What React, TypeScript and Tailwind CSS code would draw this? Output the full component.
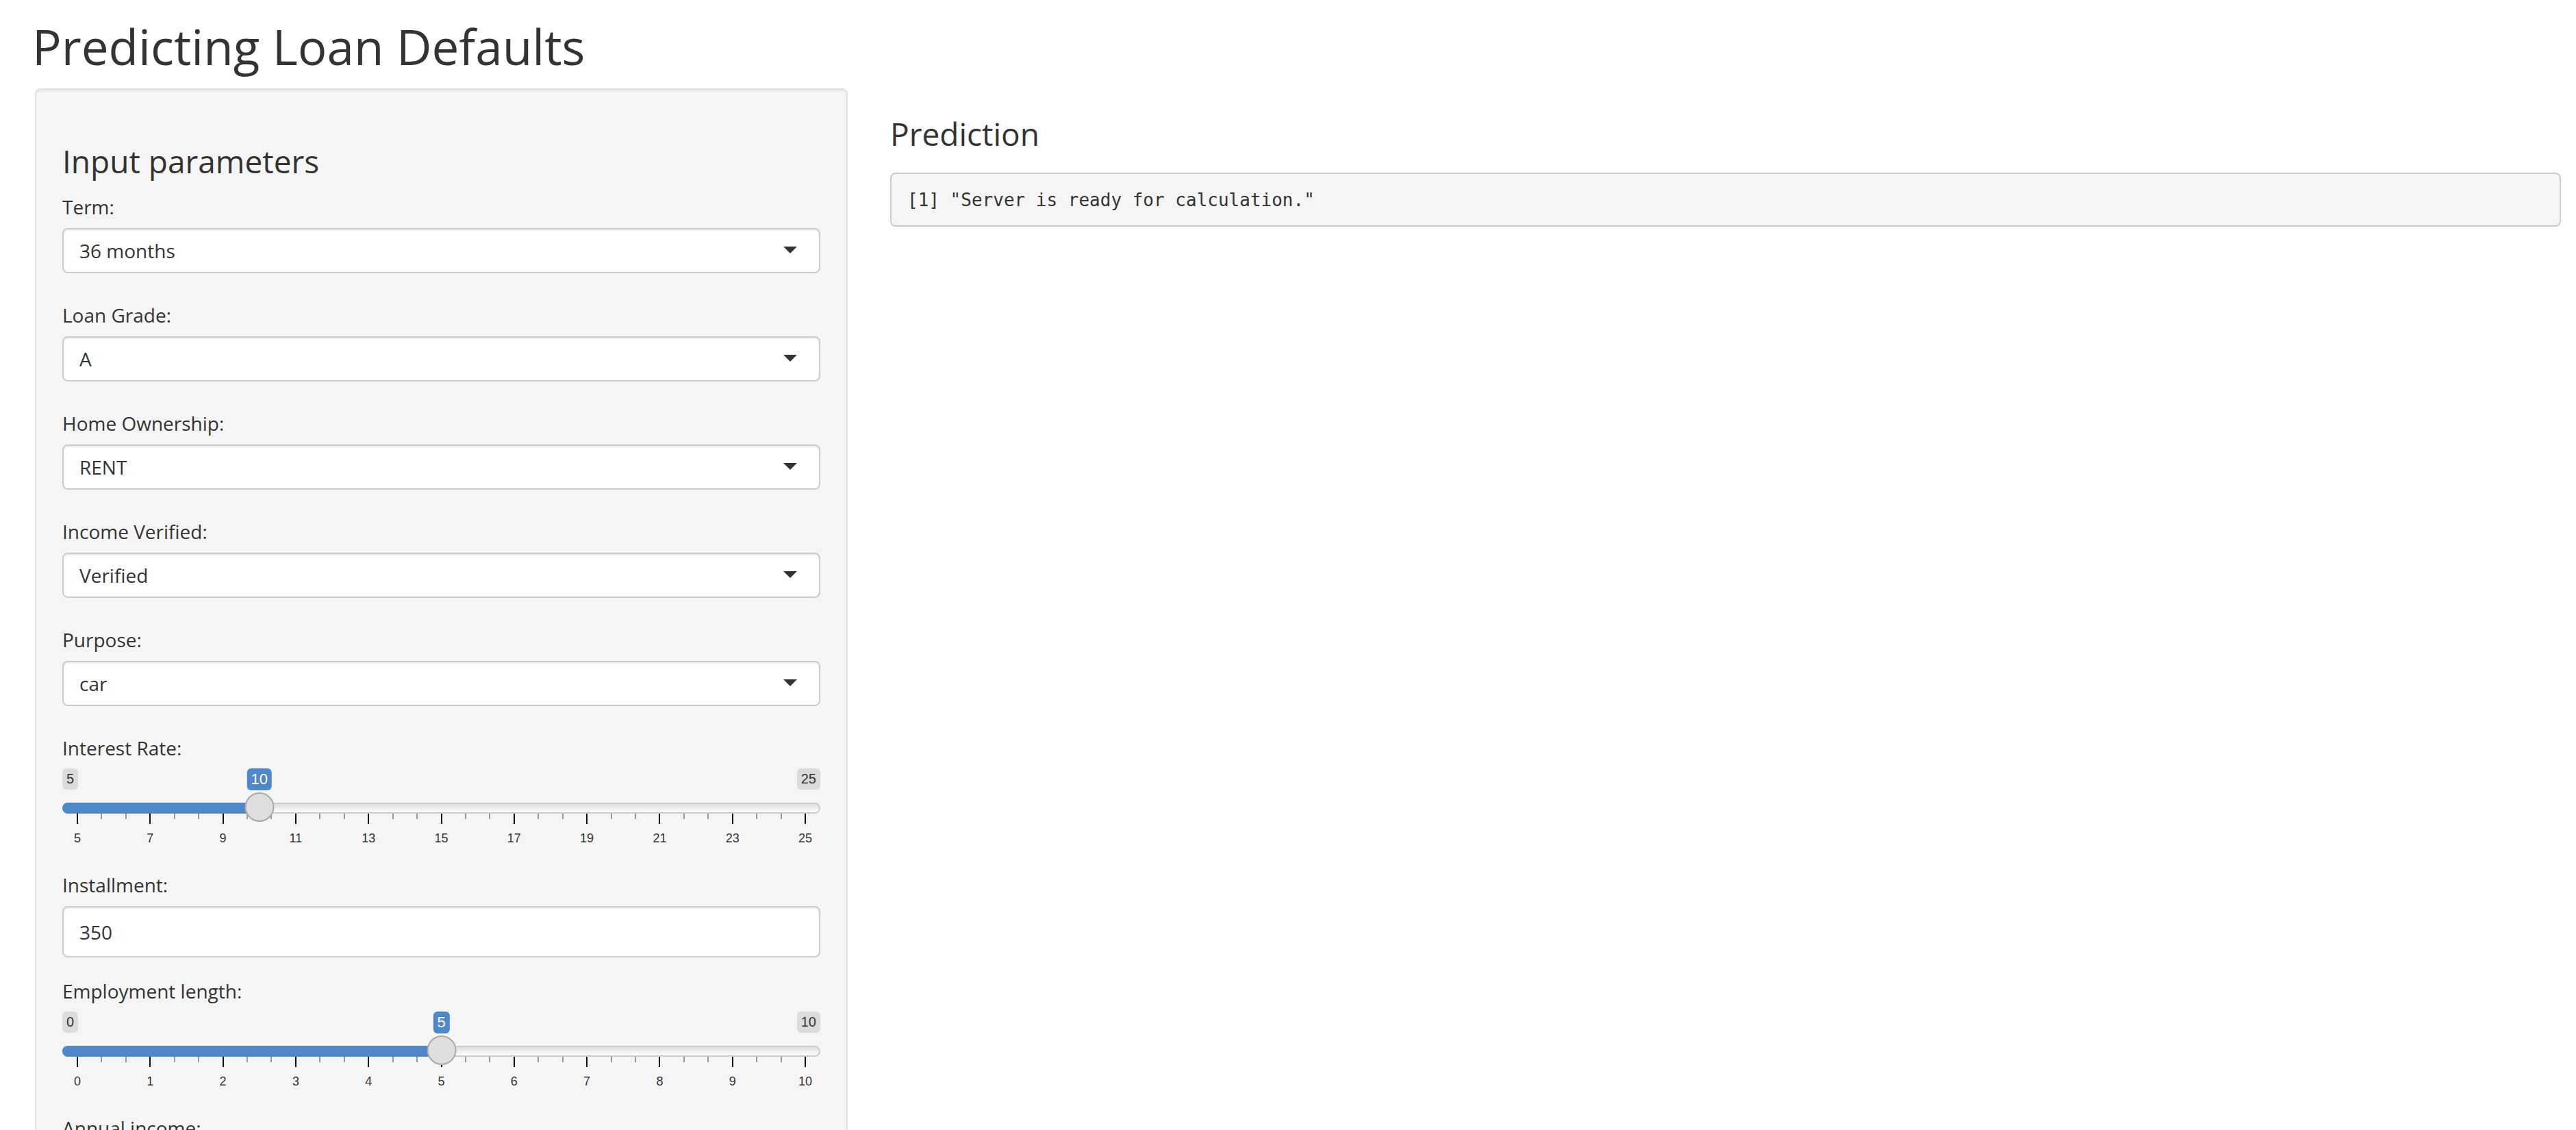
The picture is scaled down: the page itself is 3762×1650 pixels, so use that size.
import React from "react";

const BLUE = "#5087c8";

function Label({ children }: { children: React.ReactNode }) {
  return <div className="h-[40px] text-[28px] leading-[40px] text-[#333] mb-[11px]">{children}</div>;
}

function SelectBox({ value }: { value: string }) {
  return (
    <div className="flex h-[66px] items-center justify-between rounded-[8px] border-2 border-[#ccc] bg-white pl-[23px] pr-[32px] shadow-[inset_0_2px_2px_rgba(0,0,0,0.075)]">
      <span className="text-[28px] leading-none text-[#333]">{value}</span>
      <span className="mt-[-2px] h-0 w-0 border-x-[10px] border-t-[10px] border-x-transparent border-t-[#333]" />
    </div>
  );
}

function SelectGroup({ label, value }: { label: string; value: string }) {
  return (
    <div className="mb-[41px]">
      <Label>{label}</Label>
      <SelectBox value={value} />
    </div>
  );
}

function NumberGroup({ label, value }: { label: string; value: string }) {
  return (
    <div className="mb-[29px]">
      <Label>{label}</Label>
      <div className="flex h-[75px] items-center rounded-[8px] border-2 border-[#ccc] bg-white px-[23px] shadow-[inset_0_2px_2px_rgba(0,0,0,0.075)]">
        <span className="text-[28px] leading-none text-[#333]">{value}</span>
      </div>
    </div>
  );
}

interface SliderProps {
  label: string;
  min: number;
  max: number;
  step: number;
  value: number;
}

function pos(f: number) {
  return `calc(22px + (100% - 44px) * ${f})`;
}

function Slider({ label, min, max, step, value }: SliderProps) {
  const count = Math.round((max - min) / step);
  const frac = (value - min) / (max - min);
  const majors = Array.from({ length: count + 1 }, (_, i) => i);
  const minors: number[] = [];
  for (let i = 0; i < count; i++) {
    minors.push((i + 1 / 3) / count, (i + 2 / 3) / count);
  }

  return (
    <div>
      <div className="h-[40px] text-[28px] leading-[40px] text-[#333] mb-[10px]">{label}</div>
      <div className="relative h-[120px] mb-[30px] font-['Liberation_Sans',sans-serif]">
        <span className="absolute left-0 top-0 rounded-[6px] bg-black/10 px-[6px] py-[2px] text-[20px] leading-[27px] text-[#333]">
          {min}
        </span>
        <span className="absolute right-0 top-0 rounded-[6px] bg-black/10 px-[6px] py-[2px] text-[20px] leading-[27px] text-[#333]">
          {max}
        </span>
        <span
          className="absolute top-0 -translate-x-1/2 rounded-[6px] px-[6px] py-[2px] text-[22px] leading-[28px] text-white"
          style={{ left: pos(frac), backgroundColor: BLUE }}
        >
          {value}
        </span>

        <div className="absolute left-0 right-0 top-[50px] h-[16px] rounded-full border-2 border-[#ccc] bg-gradient-to-b from-[#dedede] to-white" />
        <div
          className="absolute left-0 top-[50px] h-[16px] rounded-l-full"
          style={{ width: pos(frac), backgroundColor: BLUE }}
        />

        {minors.map((f, i) => (
          <span
            key={"m" + i}
            className="absolute top-[66px] h-[8px] w-[2px] -translate-x-1/2 bg-[#999]"
            style={{ left: pos(f) }}
          />
        ))}
        {majors.map((i) => (
          <span
            key={"M" + i}
            className="absolute top-[66px] h-[15px] w-[2px] -translate-x-1/2 bg-[#111]"
            style={{ left: pos(i / count) }}
          />
        ))}
        {majors.map((i) => (
          <span
            key={"t" + i}
            className="absolute top-[93px] -translate-x-1/2 text-[18px] leading-none text-[#333]"
            style={{ left: pos(i / count) }}
          >
            {min + i * step}
          </span>
        ))}

        <div
          className="absolute top-[35px] h-[43px] w-[43px] -translate-x-1/2 rounded-full border-2 border-[#aaa] bg-[#dedede]"
          style={{ left: pos(frac) }}
        />
      </div>
    </div>
  );
}

export default function App() {
  return (
    <div className="h-[1650px] w-[3762px] overflow-hidden bg-white font-['Open_Sans',sans-serif] text-[#333]">
      <div className="pl-[51px] pr-[22px]">
        <h1 className="ml-[-4px] mt-[28px] mb-[21px] h-[80px] text-[71px] font-normal leading-[80px] text-[#333]">
          Predicting Loan Defaults
        </h1>

        <div className="flex items-start gap-[62px]">
          <aside className="w-[1187px] shrink-0 rounded-[8px] border-2 border-[#e3e3e3] bg-[#f5f5f5] px-[38px] pt-[38px] pb-[200px] shadow-[inset_0_2px_2px_rgba(0,0,0,0.05)]">
            <h3 className="mt-[41px] mb-[22px] h-[50px] text-[46px] font-normal leading-[50px] text-[#333]">
              Input parameters
            </h3>
            <SelectGroup label="Term:" value="36 months" />
            <SelectGroup label="Loan Grade:" value="A" />
            <SelectGroup label="Home Ownership:" value="RENT" />
            <SelectGroup label="Income Verified:" value="Verified" />
            <SelectGroup label="Purpose:" value="car" />
            <Slider label="Interest Rate:" min={5} max={25} step={2} value={10} />
            <NumberGroup label="Installment:" value="350" />
            <Slider label="Employment length:" min={0} max={10} step={1} value={5} />
            <NumberGroup label="Annual income:" value="50000" />
          </aside>

          <main className="flex-1">
            <h3 className="mt-[41px] mb-[32px] h-[50px] text-[46px] font-normal leading-[50px] text-[#333]">
              Prediction
            </h3>
            <pre className="flex h-[79px] items-center rounded-[8px] border-2 border-[#ccc] bg-[#f5f5f5] px-[23px] font-['DejaVu_Sans_Mono',monospace] text-[26px] leading-none text-[#333]">
              [1] "Server is ready for calculation."
            </pre>
          </main>
        </div>
      </div>
    </div>
  );
}
